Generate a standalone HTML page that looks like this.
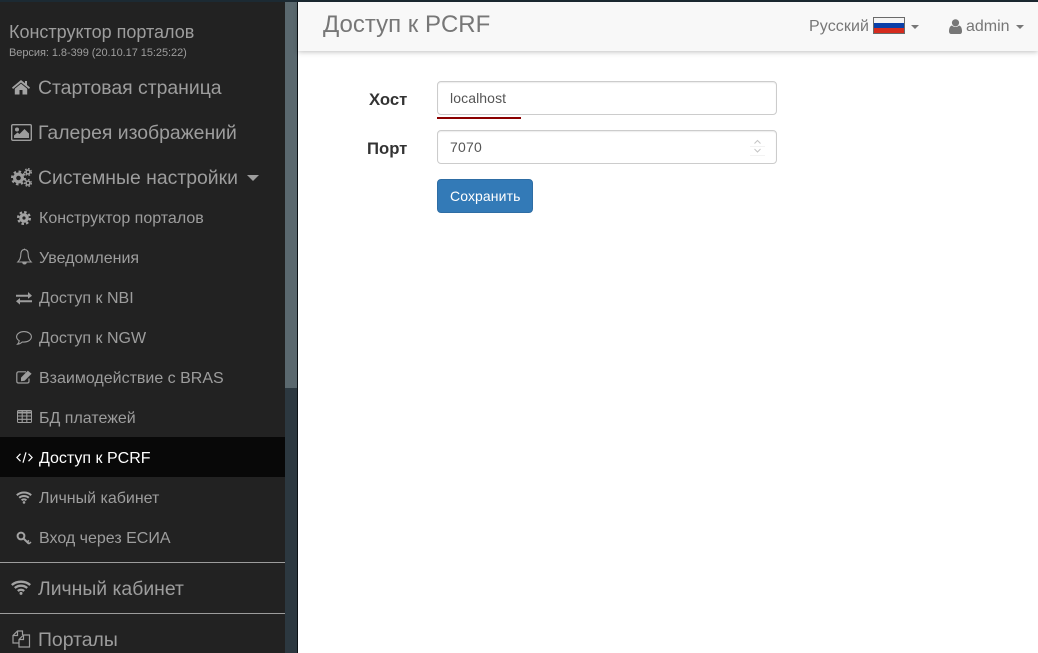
<!DOCTYPE html>
<html lang="ru"><head><meta charset="utf-8"><title>Доступ к PCRF</title>
<style>
html,body{margin:0;padding:0;width:1038px;height:653px;overflow:hidden;background:#fff;font-family:"Liberation Sans",sans-serif}
.a{position:absolute;white-space:nowrap}
.n{color:#9d9d9d;line-height:24px}
.b{font-size:19.4px;left:38px}
.s{font-size:16px;left:39px}
svg{position:absolute;overflow:visible}
</style></head><body>
<div class="a" style="left:0;top:0;width:285px;height:653px;background:#222"></div>
<div class="a" style="left:285px;top:0;width:12px;height:388px;background:#5a686e"></div>
<div class="a" style="left:285px;top:388px;width:12px;height:265px;background:#2c3840"></div>
<div class="a" style="left:297px;top:0;width:1px;height:653px;background:#0c1216"></div>
<div class="a" style="left:0;top:0;width:1038px;height:2px;background:#1c2a33"></div>
<div class="a" style="left:0;top:437px;width:285px;height:40px;background:#080808"></div>
<div class="a" style="left:0;top:562px;width:285px;height:1px;background:#9d9d9d"></div>
<div class="a" style="left:0;top:613px;width:285px;height:1px;background:#9d9d9d"></div>

<div class="a n" style="left:9px;top:20px;font-size:18px">Конструктор порталов</div>
<div class="a n" style="left:9px;top:41px;font-size:11px;letter-spacing:-.055px">Версия: 1.8-399 (20.10.17 15:25:22)</div>

<div class="a n b" style="top:76px">Стартовая страница</div>
<div class="a n b" style="top:121px">Галерея изображений</div>
<div class="a n b" style="top:166px">Системные настройки</div>
<div class="a n s" style="top:207px">Конструктор порталов</div>
<div class="a n s" style="top:247px">Уведомления</div>
<div class="a n s" style="top:287px">Доступ к NBI</div>
<div class="a n s" style="top:327px">Доступ к NGW</div>
<div class="a n s" style="top:367px">Взаимодействие с BRAS</div>
<div class="a n s" style="top:407px">БД платежей</div>
<div class="a n s" style="top:447px;color:#fff">Доступ к PCRF</div>
<div class="a n s" style="top:487px">Личный кабинет</div>
<div class="a n s" style="top:527px">Вход через ЕСИА</div>
<div class="a n b" style="top:577px">Личный кабинет</div>
<div class="a n b" style="top:628px">Порталы</div>

<!-- caret -->
<svg style="left:247px;top:175px" width="12" height="6"><path d="M0 0H12L6 6Z" fill="#9d9d9d"/></svg>

<!-- home -->
<svg style="left:12px;top:79px" width="18" height="16"><path d="M9 1 0 8.5 1 10 9 3.5 17 10 18 8.5 15 6V2H13V4.2ZM9 4.6 2.8 9.8V15.5H7.5V11H10.5V15.5H15.2V9.8Z" fill="#a3a3a3"/></svg>
<!-- picture -->
<svg style="left:11px;top:124px" width="21" height="17"><rect x=".7" y=".7" width="19.6" height="15.6" rx="1.2" fill="none" stroke="#9d9d9d" stroke-width="1.4"/><circle cx="6" cy="5.5" r="2" fill="#9d9d9d"/><path d="M3 14V11.5L6.5 8.5 8.5 10 13.5 5 18 9.5V14Z" fill="#9d9d9d"/></svg>
<!-- cogs -->
<svg style="left:11px;top:168px" width="21" height="19" fill="none" stroke="#9d9d9d"><circle cx="7.5" cy="10" r="3.9" stroke-width="3.2"/><circle cx="7.5" cy="10" r="6.4" stroke-width="2.2" stroke-dasharray="2.5 2.5"/><circle cx="17" cy="4" r="2" stroke-width="1.6"/><circle cx="17" cy="4" r="3.4" stroke-width="1.2" stroke-dasharray="1.6 1.6"/><circle cx="17" cy="15" r="2" stroke-width="1.6"/><circle cx="17" cy="15" r="3.4" stroke-width="1.2" stroke-dasharray="1.6 1.6"/></svg>
<!-- cog -->
<svg style="left:17px;top:211px" width="14" height="14" fill="none" stroke="#a3a3a3"><circle cx="7" cy="7" r="3.2" stroke-width="3.2"/><circle cx="7" cy="7" r="5.9" stroke-width="2.2" stroke-dasharray="2.5 2.13"/></svg>
<!-- bell -->
<svg style="left:17px;top:248px" width="15" height="17" fill="none" stroke="#9d9d9d" stroke-width="1.1"><path d="M7.5 1.6C4.8 1.6 3.8 3.8 3.8 6.5 3.8 10 2.8 12 .8 14H14.2C12.2 12 11.2 10 11.2 6.5 11.2 3.8 10.2 1.6 7.5 1.6Z"/><path d="M5.8 14.4C6 16.4 9 16.4 9.2 14.4" fill="#9d9d9d"/><path d="M7.5 .6V1.6"/></svg>
<!-- exchange -->
<svg style="left:16px;top:292px" width="16" height="13" fill="#9d9d9d"><path d="M0 2.8H12V0L16 3.8 12 6.8V4.8H0ZM16 8.2H4V6L0 9.2 4 12.6V10.2H16Z"/></svg>
<!-- comment -->
<svg style="left:16px;top:331px" width="16" height="14" fill="none" stroke="#9d9d9d" stroke-width="1.1"><path d="M8 .6C4 .6 .6 2.8 .6 5.8 .6 7.4 1.6 8.8 3.2 9.7 3.1 11 2.6 12.2 1.6 13.2 3.6 13 5.2 12 6.2 11 6.8 11.1 7.4 11.1 8 11.1 12 11.1 15.4 8.8 15.4 5.8 15.4 2.8 12 .6 8 .6Z"/></svg>
<!-- edit -->
<svg style="left:16px;top:370px" width="16" height="14"><path d="M13 8.5V11.2C13 12.3 12.3 13 11.2 13H2.6C1.5 13 .8 12.3 .8 11.2V3.6C.8 2.5 1.5 1.8 2.6 1.8H10" fill="none" stroke="#9d9d9d" stroke-width="1.2"/><path d="M5 7.6 11.8 .6 15.6 3.8 8.6 10.8 5 11.2Z" fill="#9d9d9d"/></svg>
<!-- table -->
<svg style="left:17px;top:410px" width="15" height="13" fill="none" stroke="#9d9d9d"><rect x=".5" y=".5" width="14" height="12" rx="1"/><path d="M0 2.5H15" stroke-width="2"/><path d="M.5 6H14.5M.5 9.3H14.5M5.2 1V12.5M9.8 1V12.5" stroke-width="1.1"/></svg>
<!-- code -->
<svg style="left:16px;top:452px" width="17" height="11" fill="none" stroke="#fff" stroke-width="1.2"><path d="M4.5 1.8 .9 5.5 4.5 9.2M12.5 1.8 16.1 5.5 12.5 9.2M10 .3 7 10.7"/></svg>
<!-- wifi small -->
<svg style="left:16px;top:491px" width="16" height="13" fill="none" stroke="#a3a3a3" stroke-width="2"><path d="M.8 4.2C4.8.6 11.2.6 15.2 4.2M3.2 6.8C5.9 4.4 10.1 4.4 12.8 6.8M5.6 9.3C7 8.1 9 8.1 10.4 9.3"/><circle cx="8" cy="11.4" r="1.3" fill="#a3a3a3" stroke="none"/></svg>
<!-- key -->
<svg style="left:16px;top:531px" width="16" height="15" fill="none" stroke="#a3a3a3"><circle cx="5" cy="5" r="3.4" stroke-width="2"/><path d="M7.5 7.5 13 12.8" stroke-width="2"/><path d="M11 11 13 9.5M13 12.8 15 11" stroke-width="1.5"/></svg>
<!-- wifi large -->
<svg style="left:11px;top:580px" width="20" height="15" fill="none" stroke="#a3a3a3" stroke-width="2.4"><path d="M.8 5C5.8.6 14.2.6 19.2 5M3.8 8C7.4 4.9 12.6 4.9 16.2 8M6.8 11C8.7 9.4 11.3 9.4 13.2 11"/><circle cx="10" cy="13.4" r="1.5" fill="#a3a3a3" stroke="none"/></svg>
<!-- copy -->
<svg style="left:12px;top:630px" width="19" height="18" fill="none" stroke="#9d9d9d" stroke-width="1.2"><path d="M7 13H1V5.5L5.5 1H10.5V5"/><path d="M5.5 1V5.5H1"/><path d="M7 13V9.5L11.5 5H17.5V17H7Z"/><path d="M11.5 5V9.5H7"/></svg>

<!-- navbar -->
<div class="a" style="left:298px;top:2px;width:740px;height:49px;background:#f8f8f8;box-shadow:0 1px 5px rgba(0,0,0,.25)"></div>
<div class="a" style="left:323px;top:10px;font-size:24px;line-height:30px;color:#777">Доступ к PCRF</div>
<div class="a" style="left:809px;top:15px;font-size:16px;line-height:24px;color:#777;letter-spacing:.1px">Русский</div>
<svg style="left:873px;top:17px" width="32" height="17"><rect width="32" height="17" fill="#6a6a6a"/><rect x="1" y="1" width="30" height="5" fill="#f4f4f4"/><rect x="1" y="6" width="30" height="5" fill="#0a3fa8"/><rect x="1" y="11" width="30" height="5" fill="#d52b1e"/></svg>
<svg style="left:911px;top:25px" width="8" height="4"><path d="M0 0H8L4 4Z" fill="#777"/></svg>
<svg style="left:949px;top:19px" width="13" height="15" fill="#777"><circle cx="6.5" cy="3.8" r="3.6"/><path d="M3 6.5C1 7 0 9 0 12.5 0 14 1 15 2.2 15H10.8C12 15 13 14 13 12.5 13 9 12 7 10 6.5 8.2 8.4 4.8 8.4 3 6.5Z"/></svg>
<div class="a" style="left:966px;top:15px;font-size:16px;line-height:24px;color:#777">admin</div>
<svg style="left:1016px;top:25px" width="8" height="4"><path d="M0 0H8L4 4Z" fill="#777"/></svg>

<!-- form -->
<div class="a" style="left:369px;top:88px;font-size:16.7px;line-height:24px;font-weight:bold;color:#333">Хост</div>
<div class="a" style="left:367px;top:137px;font-size:16.7px;line-height:24px;font-weight:bold;color:#333">Порт</div>
<div class="a" style="left:437px;top:81px;width:338px;height:32px;border:1px solid #ccc;border-radius:4px;background:#fff;box-shadow:inset 0 1px 1px rgba(0,0,0,.075)"></div>
<div class="a" style="left:450px;top:87px;font-size:14px;line-height:22px;color:#555;letter-spacing:.1px">localhost</div>
<div class="a" style="left:437px;top:117px;width:84px;height:2px;background:#8b0000"></div>
<div class="a" style="left:437px;top:130px;width:338px;height:32px;border:1px solid #ccc;border-radius:4px;background:#fff;box-shadow:inset 0 1px 1px rgba(0,0,0,.075)"></div>
<div class="a" style="left:450px;top:136px;font-size:14px;line-height:22px;color:#555;letter-spacing:.2px">7070</div>
<svg style="left:750px;top:138px" width="15" height="18" fill="none"><path d="M0 8.5H15M0 17.5H15" stroke="#f3f3f3"/><path d="M4.5 5.5 7.5 2.5 10.5 5.5M4.5 11 7.5 14 10.5 11" stroke="#c4c4c4"/></svg>
<div class="a" style="left:437px;top:179px;width:94px;height:32px;border:1px solid #2e6da4;border-radius:4px;background:#337ab7"></div>
<div class="a" style="left:450px;top:185px;font-size:14px;line-height:22px;color:#fff;letter-spacing:.1px">Сохранить</div>
</body></html>
